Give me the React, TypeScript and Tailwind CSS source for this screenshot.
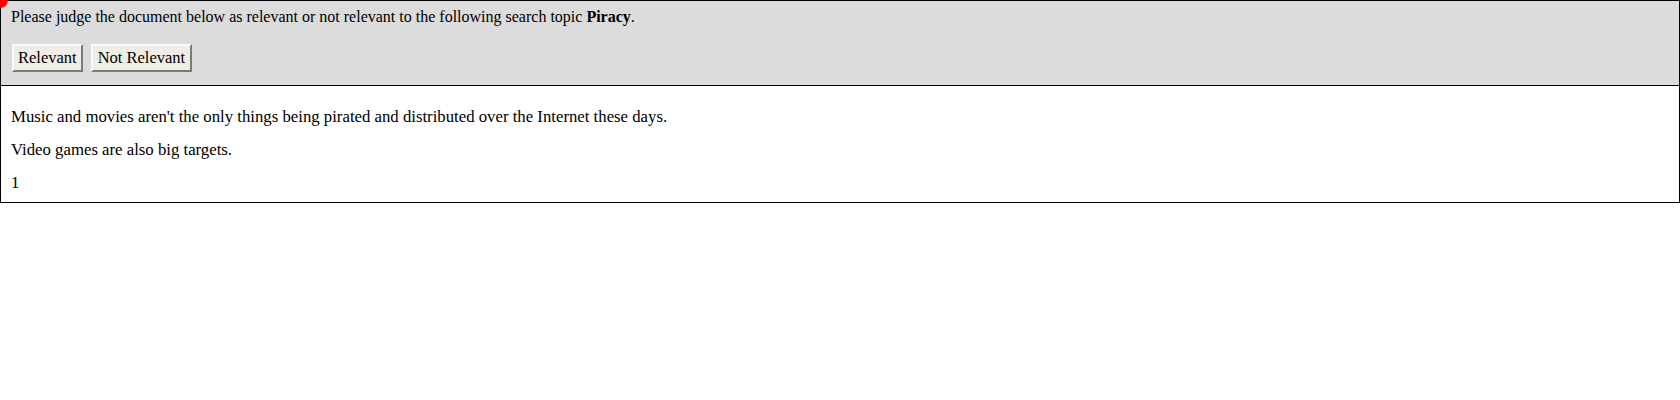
export default function App() {
  return (
    <main className="relative w-[1680px] bg-white font-['Liberation_Serif',serif] text-[16px] text-black">
      {/* pointer marker */}
      <div className="absolute -left-[8px] -top-[8px] h-[16px] w-[16px] rounded-full bg-[#ff0000]" />

      {/* Question header */}
      <div className="h-[86px] border border-black bg-[#dcdcdc] px-[10px] pt-[7px]">
        <p className="leading-[18px]">
          Please judge the document below as relevant or not relevant to the following search topic{' '}
          <b>Piracy</b>.
        </p>
        <div className="mt-[18px] flex gap-[8px] pl-[1px]">
          <button className="h-[28px] border-2 border-t-[#fafafa] border-l-[#fafafa] border-r-[#7a7a7a] border-b-[#7a7a7a] bg-[#f0ece6] px-[4px] text-[16.5px] leading-[20px]">
            Relevant
          </button>
          <button className="h-[28px] border-2 border-t-[#fafafa] border-l-[#fafafa] border-r-[#7a7a7a] border-b-[#7a7a7a] bg-[#f0ece6] px-[5px] text-[16.5px] leading-[20px]">
            Not Relevant
          </button>
        </div>
      </div>

      {/* Document */}
      <div className="flex h-[117px] flex-col gap-[13px] border-x border-b border-black px-[10px] pt-[21px] text-[16.75px]">
        <p className="leading-[20px]">
          Music and movies aren't the only things being pirated and distributed over the Internet these days.
        </p>
        <p className="leading-[20px]">Video games are also big targets.</p>
        <p className="leading-[20px]">1</p>
      </div>
    </main>
  );
}
